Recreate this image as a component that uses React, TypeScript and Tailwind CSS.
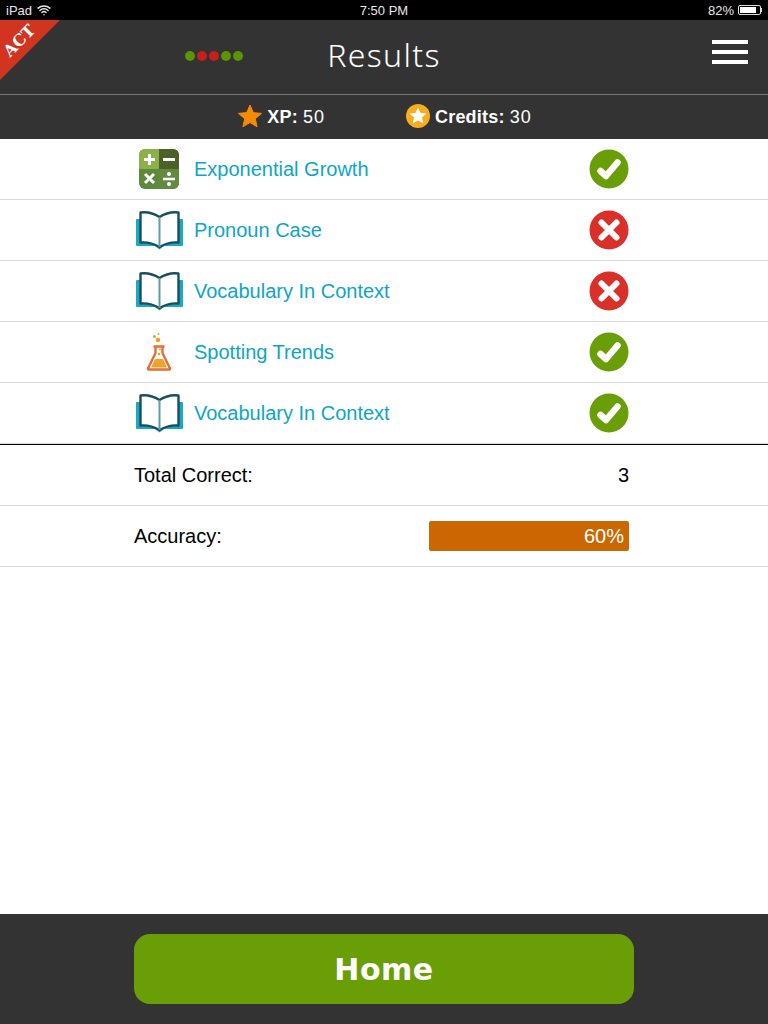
import { Wifi } from 'lucide-react';

type Topic = { name: string; icon: 'calc' | 'book' | 'flask'; correct: boolean };

const topics: Topic[] = [
  { name: 'Exponential Growth', icon: 'calc', correct: true },
  { name: 'Pronoun Case', icon: 'book', correct: false },
  { name: 'Vocabulary In Context', icon: 'book', correct: false },
  { name: 'Spotting Trends', icon: 'flask', correct: true },
  { name: 'Vocabulary In Context', icon: 'book', correct: true },
];

const dots = ['bg-[#5b9406]', 'bg-[#c81e1e]', 'bg-[#c81e1e]', 'bg-[#5b9406]', 'bg-[#5b9406]'];

function CalcIcon() {
  return (
    <svg width="40" height="40" viewBox="0 0 40 40">
      <rect width="40" height="40" rx="6" fill="#5d8a3a" />
      <path d="M6 0H20V20H0V6A6 6 0 0 1 6 0Z" fill="#8cb04a" />
      <path d="M20 0H34A6 6 0 0 1 40 6V20H20Z" fill="#4c6128" />
      <path d="M20 20H40V34A6 6 0 0 1 34 40H20Z" fill="#648a42" />
      <path d="M5 10.500H16M10.500 5V16M24 10.500H36" stroke="#fff" strokeWidth="3" />
      <path d="M6 25L15 34M15 25L6 34" stroke="#fff" strokeWidth="3" />
      <path d="M24 30H36" stroke="#fff" strokeWidth="2.500" />
      <circle cx="30" cy="25" r="2" fill="#fff" />
      <circle cx="30" cy="35" r="2" fill="#fff" />
    </svg>
  );
}

function BookIcon() {
  return (
    <svg width="48" height="40" viewBox="0 0 48 40">
      <path d="M2 9H47A1 1 0 0 1 48 10V35A1 1 0 0 1 47 36H29L24.500 39.500L20 36H2A1 1 0 0 1 1 35V10A1 1 0 0 1 2 9Z" fill="#1aa8c4" />
      <path d="M5.500 2.500Q15 1 24.500 7Q34 1 43.500 2.500V32.500Q34 31.500 24.500 37Q15 31.500 5.500 32.500Z" fill="#fff" stroke="#184f5c" strokeWidth="2.400" strokeLinejoin="round" />
      <path d="M24.500 7V37" stroke="#5f9aa5" strokeWidth="2" />
    </svg>
  );
}

function FlaskIcon() {
  return (
    <svg width="48" height="40" viewBox="0 0 48 40">
      <circle cx="23" cy="8" r="2.300" fill="#e9a02c" />
      <circle cx="19.500" cy="4.500" r="1.500" fill="#e9a02c" />
      <circle cx="23.500" cy="2" r="1" fill="#e9a02c" />
      <path d="M18.500 14.500H29.500M20.500 14.500V21L13.500 35.500A1 1 0 0 0 14.500 37.500H33.500A1 1 0 0 0 34.500 35.500L27.500 21V14.500" fill="none" stroke="#e0703a" strokeWidth="2.400" strokeLinejoin="round" />
      <path d="M20 27H28L32 35.500H16Z" fill="#eea42a" />
      <circle cx="24" cy="22" r="1.300" fill="#e9a02c" />
      <circle cx="25" cy="17.500" r="1" fill="#e9a02c" />
    </svg>
  );
}

function StatusMark({ correct }: { correct: boolean }) {
  return correct ? (
    <svg width="40" height="40" viewBox="0 0 40 40">
      <circle cx="20" cy="20" r="19.500" fill="#6a9e06" />
      <path d="M11.500 22L17 27L28.500 13.500" fill="none" stroke="#fff" strokeWidth="6.500" strokeLinecap="round" strokeLinejoin="round" />
    </svg>
  ) : (
    <svg width="40" height="40" viewBox="0 0 40 40">
      <circle cx="20" cy="20" r="19.500" fill="#d9302a" />
      <path d="M12.500 12.500L27.500 27.500M27.500 12.500L12.500 27.500" fill="none" stroke="#fff" strokeWidth="6" strokeLinecap="round" />
    </svg>
  );
}

function TopicIcon({ icon }: { icon: Topic['icon'] }) {
  if (icon === 'calc') return <CalcIcon />;
  if (icon === 'flask') return <FlaskIcon />;
  return <BookIcon />;
}

export default function App() {
  return (
    <div className="relative flex h-[1024px] w-[768px] flex-col overflow-hidden bg-white font-['Liberation_Sans',sans-serif]">
      {/* Status bar */}
      <div className="grid h-5 shrink-0 grid-cols-3 items-center bg-black px-1.5 text-[13px] leading-none text-[#e8e8e8]">
        <div className="flex items-center gap-[5px]">
          <span>iPad</span>
          <Wifi className="size-[14px]" strokeWidth={2.5} />
        </div>
        <div className="text-center">7:50 PM</div>
        <div className="flex items-center justify-end gap-1">
          <span>82%</span>
          <div className="flex items-center">
            <div className="h-2.5 w-[23px] rounded-[2px] border border-[#ddd] p-px">
              <div className="h-full w-[82%] bg-white" />
            </div>
            <div className="h-1 w-px bg-[#ddd]" />
          </div>
        </div>
      </div>

      {/* ACT ribbon */}
      <div className="absolute left-0 top-5 z-10 size-[60px] bg-[#d2351f] [clip-path:polygon(0_0,100%_0,0_100%)]">
        <span className="absolute left-[1px] top-[13px] -rotate-45 font-['DejaVu_Serif',serif] text-[16px] font-bold leading-none text-white">ACT</span>
      </div>

      {/* Header */}
      <div className="relative flex h-[75px] shrink-0 items-center justify-center border-b border-[#777] bg-[#333]">
        <div className="absolute left-[185px] top-[31px] flex">
          {dots.map((c, i) => (
            <div key={i} className={`mr-[2px] size-[10px] rounded-full ${c}`} />
          ))}
        </div>
        <h1 className="pb-[4px] font-['Noto_Sans',sans-serif] text-[32px] font-light tracking-[1.3px] text-white">Results</h1>
        <div className="absolute right-5 top-5 flex w-9 flex-col gap-[6px]">
          <div className="h-1 bg-white" />
          <div className="h-1 bg-white" />
          <div className="h-1 bg-white" />
        </div>
      </div>

      {/* XP and credits */}
      <div className="flex h-11 shrink-0 items-center justify-center gap-[81px] bg-[#333] pl-[2px] pt-px text-[18px] text-white">
        <div className="flex items-center gap-[5px]">
          <svg width="24" height="24" viewBox="0 0 24 24" className="mb-[3px]">
            <path d="M12 1L15.300 8.600L23.500 9.400L17.300 14.800L19.100 22.800L12 18.600L4.900 22.800L6.700 14.800L.5 9.400L8.700 8.600Z" fill="#f58a07" stroke="#f58a07" strokeLinejoin="round" />
          </svg>
          <span><b className="tracking-[0.2px]">XP:</b> <span className="tracking-[1px]">50</span></span>
        </div>
        <div className="flex items-center gap-[5px]">
          <svg width="24" height="24" viewBox="0 0 24 24" className="mb-[3px]">
            <circle cx="12" cy="12" r="12" fill="#f6ae1c" />
            <path d="M12 4.500L14.200 9.300L19.500 9.900L15.500 13.400L16.600 18.600L12 16L7.400 18.600L8.500 13.400L4.500 9.900L9.800 9.300Z" fill="#fff" stroke="#fff" strokeLinejoin="round" />
          </svg>
          <span><b className="tracking-[0.2px]">Credits:</b> <span className="tracking-[1px]">30</span></span>
        </div>
      </div>

      {/* Topic rows */}
      <div className="shrink-0 border-b border-black">
        {topics.map((t, i) => (
          <div key={i} className="flex h-[61px] items-center border-b border-[#d9d9d9] pl-[135px] pr-[139px]">
            <div className="mr-[11px] flex w-[48px] shrink-0 items-center justify-center">
              <TopicIcon icon={t.icon} />
            </div>
            <span className="flex-1 text-[20px] text-[#0ea5c6]">{t.name}</span>
            <StatusMark correct={t.correct} />
          </div>
        ))}
      </div>

      {/* Summary */}
      <div className="flex h-[61px] shrink-0 items-center justify-between border-b border-[#d9d9d9] pl-[134px] pr-[139px] text-[20px] text-black">
        <span>Total Correct:</span>
        <span>3</span>
      </div>
      <div className="flex h-[61px] shrink-0 items-center justify-between border-b border-[#d9d9d9] pl-[134px] pr-[139px] text-[20px] text-black">
        <span>Accuracy:</span>
        <div className="flex h-[30px] w-[200px] items-center justify-end rounded-[2px] bg-[#cc6600] pr-[5px] text-white">60%</div>
      </div>

      <div className="flex-1" />

      {/* Footer */}
      <div className="flex h-[110px] shrink-0 items-center justify-center bg-[#333]">
        <button className="flex h-[70px] w-[500px] items-center justify-center rounded-2xl bg-[#6a9e06] font-['DejaVu_Sans',sans-serif] text-[30px] font-bold tracking-[0.5px] text-white">
          Home
        </button>
      </div>
    </div>
  );
}
